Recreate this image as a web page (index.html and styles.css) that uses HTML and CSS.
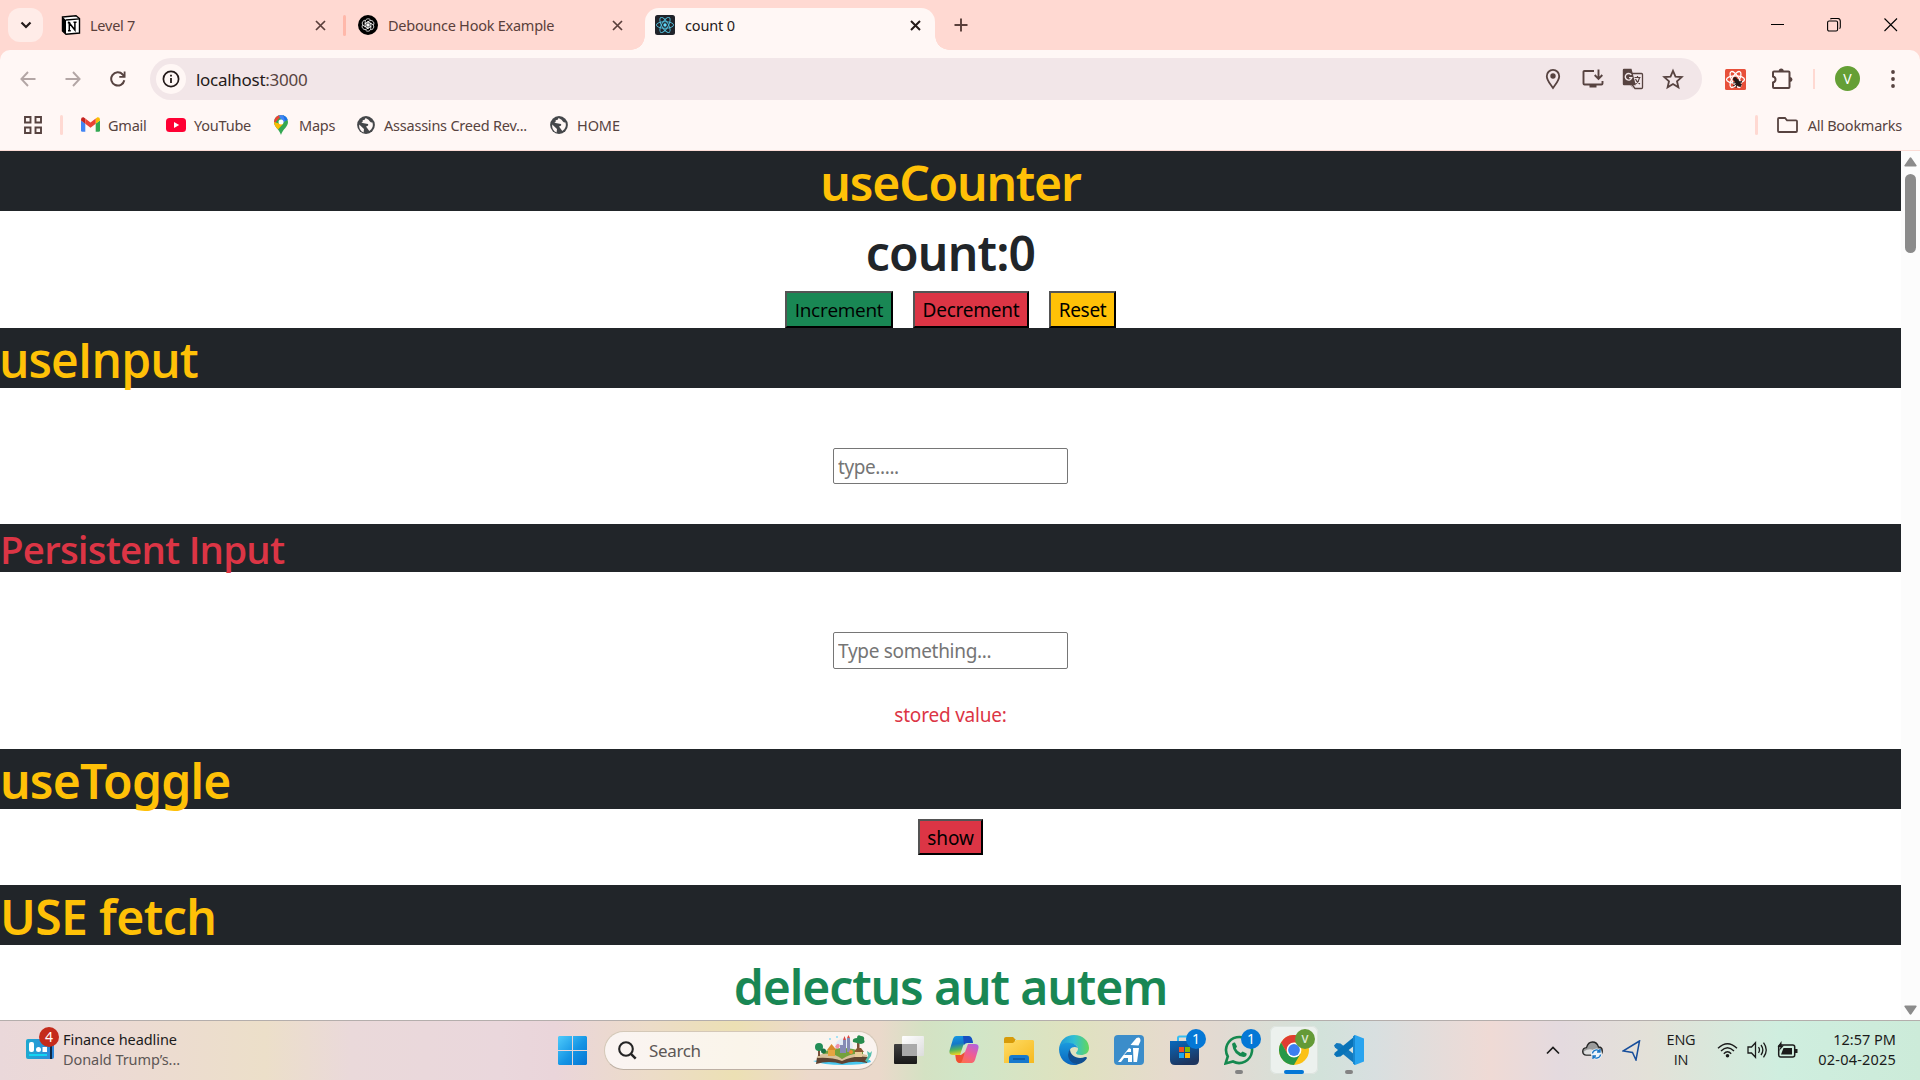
FILE: index.html
```
<!DOCTYPE html>
<html lang="en">
<head>
<meta charset="utf-8">
<title>count 0</title>
<link rel="stylesheet" href="styles.css">
</head>
<body>
<div class="screen">
  <header class="tabstrip">
    <div class="tab-search"><svg width="12" height="8" viewBox="0 0 12 8"><path d="M1.5 1.5 6 6l4.500-4.500" fill="none" stroke="#241a19" stroke-width="2.200"/></svg></div>
    <div class="tab tab-first">
      <svg width="20" height="20" viewBox="0 0 20 20"><path d="M1.500 2 15 .8 18.500 3.500V18L5 19.200 1.500 16z" fill="#fff" stroke="#000" stroke-width="1.400"/><path d="M1.500 2 5 5v14L1.500 16z" fill="#000"/><path d="M5 5 18.500 3.800" stroke="#000" stroke-width="1.300"/><path d="M8.300 15.500V8l5.600 7V7.500M6.800 7.800h2.500M12.500 7.300h3M7 15.700h2.800" stroke="#000" stroke-width="1.500" fill="none"/></svg>
      <span class="tab-title">Level 7</span>
      <svg class="close" width="11" height="11" viewBox="0 0 11 11"><path d="m1 1 9 9m0-9-9 9" stroke="#5a3f3b" stroke-width="1.700"/></svg>
    </div>
    <i class="tab-sep"></i>
    <div class="tab tab-second">
      <svg width="20" height="20" viewBox="0 0 20 20"><circle cx="10" cy="10" r="10" fill="#000"/><g fill="none" stroke="#fff" stroke-width=".8"><path id="petal" d="M7.200 12.200V6.800c0-3.500 4.600-4 5.500-1.300M8.600 10.800l4.200-2.400"/><use href="#petal" transform="rotate(60 10 10)"/><use href="#petal" transform="rotate(120 10 10)"/><use href="#petal" transform="rotate(180 10 10)"/><use href="#petal" transform="rotate(240 10 10)"/><use href="#petal" transform="rotate(300 10 10)"/></g></svg>
      <span class="tab-title">Debounce Hook Example</span>
      <svg class="close" width="11" height="11" viewBox="0 0 11 11"><path d="m1 1 9 9m0-9-9 9" stroke="#5a3f3b" stroke-width="1.700"/></svg>
    </div>
    <div class="tab tab-active">
      <svg width="20" height="20" viewBox="0 0 20 20"><rect width="20" height="20" rx="2.500" fill="#20232a"/><g fill="none" stroke="#53c1de" stroke-width=".9"><ellipse cx="10" cy="10" rx="8.600" ry="3.300"/><ellipse cx="10" cy="10" rx="8.600" ry="3.300" transform="rotate(60 10 10)"/><ellipse cx="10" cy="10" rx="8.600" ry="3.300" transform="rotate(120 10 10)"/></g><circle cx="10" cy="10" r="1.700" fill="#61dafb"/></svg>
      <span class="tab-title">count 0</span>
      <svg class="close" width="11" height="11" viewBox="0 0 11 11"><path d="m1 1 9 9m0-9-9 9" stroke="#241a19" stroke-width="2"/></svg>
    </div>
    <svg class="new-tab" width="14" height="14" viewBox="0 0 14 14"><path d="M7 .5v13M.5 7h13" stroke="#5a3f3b" stroke-width="1.900"/></svg>
    <div class="window-controls">
      <svg width="14" height="14" viewBox="0 0 14 14"><path d="M1 6.500h13" stroke="#000"/></svg>
      <svg width="14" height="14" viewBox="0 0 14 14"><rect x=".6" y="3" width="10" height="10" rx="1.500" fill="none" stroke="#000" stroke-width="1.100"/><path d="M3.300 1.200Q4 .5 5 .5h5.500q2.800 0 2.800 2.800V9q0 1-.8 1.600" fill="none" stroke="#000" stroke-width="1.100"/></svg>
      <svg width="14" height="14" viewBox="0 0 14 14"><path d="m.5.5 12.500 12.500m0-12.500L.5 13" stroke="#000" stroke-width="1.100"/></svg>
    </div>
  </header>

  <div class="chrome-body">
    <div class="toolbar">
      <svg class="back" width="16" height="16" viewBox="0 0 16 16"><path d="M8 1 1.400 8 8 15M1.500 8H15.500" fill="none" stroke="#b3a6a5" stroke-width="1.900"/></svg>
      <svg class="forward" width="16" height="16" viewBox="0 0 16 16"><path d="M8 1 14.600 8 8 15M14.500 8H.5" fill="none" stroke="#b3a6a5" stroke-width="1.900"/></svg>
      <svg class="reload" width="16" height="16" viewBox="0 0 16 16"><path d="M14.300 9.200A6.600 6.600 0 1 1 12.700 3.500L14.500 5.500" fill="none" stroke="#574340" stroke-width="2"/><path d="M15.500.5v6.300H9.300V5h4.400V.5z" fill="#574340"/></svg>
      <div class="omnibox">
        <span class="site-info"><svg width="18" height="18" viewBox="0 0 18 18"><circle cx="9" cy="9" r="7.600" fill="none" stroke="#241a19" stroke-width="1.700"/><path d="M9 8v5M9 4.800v1.800" stroke="#241a19" stroke-width="1.800"/></svg></span>
        <span class="url">localhost<span class="port">:3000</span></span>
        <div class="omni-icons">
          <svg width="22" height="22" viewBox="0 0 22 22"><path d="M11 1.900a6.200 6.200 0 0 0-6.200 6.300C4.800 12.400 8 15.500 11 20c3-4.500 6.200-7.600 6.200-11.800A6.200 6.200 0 0 0 11 1.900z" fill="none" stroke="#574340" stroke-width="1.800"/><circle cx="11" cy="8" r="2.700" fill="#574340"/></svg>
          <svg width="22" height="22" viewBox="0 0 22 22"><path d="M12 3H2.500q-1 0-1 1v11.500q0 1 1 1h17q1 0 1-1V13" fill="none" stroke="#574340" stroke-width="1.900"/><path d="M7.500 17h7v2.500h-7z" fill="#574340"/><path d="M16.500 1.500v9M12.700 7l3.800 3.800L20.300 7" fill="none" stroke="#574340" stroke-width="1.900"/></svg>
          <svg width="22" height="22" viewBox="0 0 22 22"><path d="M10 5.500h9.500q1 0 1 1v13q0 1-1 1H13l-3-4" fill="none" stroke="#574340" stroke-width="1.300"/><path d="M2 .8h7.500l4.300 16.500H9l2.500 4-3-4H2q-1.200 0-1.200-1.200V2Q.8.800 2 .8z" fill="#574340"/><path d="M9.300 6.900A3.300 3.300 0 1 0 9.800 9.600H7" fill="none" stroke="#f2e7e8" stroke-width="1.400"/><path d="M12.500 9.500h6M15.500 8v1.500m2 .3c-.5 3-2 4.700-4 6.200m0-5c.8 2.300 2.500 4 4.500 5" fill="none" stroke="#574340" stroke-width="1.200"/></svg>
          <svg width="22" height="22" viewBox="0 0 22 22"><path d="m11 2.800 2.500 5.800 6.200.5-4.700 4.100 1.400 6.100L11 16l-5.400 3.300L7 13.200 2.300 9.100l6.200-.5z" fill="none" stroke="#574340" stroke-width="1.800"/></svg>
        </div>
      </div>
      <svg class="ext" width="21" height="21" viewBox="0 0 21 21"><rect width="21" height="21" rx="1.500" fill="#e8503a"/><g fill="none" stroke="#fff" stroke-width="1.300"><ellipse cx="10.500" cy="10.500" rx="9" ry="3.600"/><ellipse cx="10.500" cy="10.500" rx="9" ry="3.600" transform="rotate(60 10.500 10.500)"/><ellipse cx="10.500" cy="10.500" rx="9" ry="3.600" transform="rotate(120 10.500 10.500)"/></g><ellipse cx="12.700" cy="13.500" rx="2.300" ry="4.500" transform="rotate(-35 12.700 13.500)" fill="#241a19"/><circle cx="10" cy="10" r="2" fill="#241a19"/><path d="m8 14 9-1m-6 6 2-9m-5 7 9-5m-2 6 1.500-3" stroke="#241a19" stroke-width="1"/></svg>
      <svg class="puzzle" width="22" height="22" viewBox="0 0 22 22"><path d="M3 3.500h14.500q1 0 1 1v14.500q0 1-1 1H3q-1 0-1-1v-4.500q2.500-.6 2.500-3t-2.500-3V4.500q0-1 1-1z" fill="none" stroke="#574340" stroke-width="2"/><path d="M7.700 3a2.500 2.500 0 0 1 5 0zM19 9a2.500 2.500 0 0 1 0 5z" fill="#574340"/></svg>
      <i class="tool-sep"></i>
      <span class="avatar">V</span>
      <svg class="kebab" width="4" height="18" viewBox="0 0 4 18"><circle cx="2" cy="2" r="1.900" fill="#574340"/><circle cx="2" cy="9" r="1.900" fill="#574340"/><circle cx="2" cy="16" r="1.900" fill="#574340"/></svg>
    </div>

    <nav class="bookmarks">
      <svg class="apps" width="18" height="18" viewBox="0 0 18 18"><path d="M1 1h5.500v5.500H1zM11.500 1H17v5.500h-5.500zM1 11.500h5.500V17H1zM11.500 11.500H17V17h-5.500z" fill="none" stroke="#574340" stroke-width="1.900"/></svg>
      <i class="bm-sep"></i>
      <span class="bm gmail"><svg width="19" height="15" viewBox="0 0 19 15"><path d="M0 3.500v10q0 1.300 1.300 1.300h3V6.500z" fill="#4285f4"/><path d="M19 3.500v10q0 1.300-1.300 1.300h-3V6.500z" fill="#34a853"/><path d="M0 2.500Q.2 0 2.500.3l1.800 1.200v5.300L0 3.600z" fill="#c5221f"/><path d="M19 2.500Q18.800 0 16.500.3l-1.800 1.200v5.300L19 3.600z" fill="#fbbc04"/><path d="M4.300 1.500 9.500 5.400l5.200-3.900v5.300l-5.200 3.900-5.200-3.900z" fill="#ea4335"/></svg>Gmail</span>
      <span class="bm youtube"><svg width="20" height="14" viewBox="0 0 20 14"><rect width="20" height="14" rx="3.500" fill="#f03"/><path d="M8 4v6l5.200-3z" fill="#fff"/></svg>YouTube</span>
      <span class="bm maps"><svg width="14" height="20" viewBox="0 0 14 20"><clipPath id="pin"><path d="M7 0a7 7 0 0 0-7 7c0 5 5.300 7 7 13 1.700-6 7-8 7-13a7 7 0 0 0-7-7z"/></clipPath><g clip-path="url(#pin)"><path d="M0 0h14v20H0z" fill="#34a853"/><path d="M0 0h8L0 9z" fill="#ea4335"/><path d="M4.500 0H14v3.500L9 8z" fill="#4285f4"/><path d="M9 0h5v5l-3 1z" fill="#1a73e8"/><path d="m0 7 5 1.500 4 .5-5.500 6L0 12z" fill="#fbbc04"/></g><circle cx="7" cy="7" r="2.500" fill="#fff"/></svg>Maps</span>
      <span class="bm globe creed"><svg width="18" height="18" viewBox="0 0 18 18"><circle cx="9" cy="9" r="8.900" fill="#45474a"/><path d="M2.200 8.500 7 13l-.4 3.400Q1.500 14.500 2.200 8.500zM8.600 2q-.4 2.200-2.900 2.200.5 2.200-1.400 2.600 4.400 1 6.700 1.200Q12 10 9 10.400l3.300 4.600q4.800-3 3.200-8.500-1.800.2-2.600-1-.6-2-4.300-3.500z" fill="#fff7f5"/></svg>Assassins Creed Rev...</span>
      <span class="bm globe home"><svg width="18" height="18" viewBox="0 0 18 18"><circle cx="9" cy="9" r="8.900" fill="#45474a"/><path d="M2.200 8.500 7 13l-.4 3.400Q1.500 14.500 2.200 8.500zM8.600 2q-.4 2.200-2.900 2.200.5 2.200-1.400 2.600 4.400 1 6.700 1.200Q12 10 9 10.400l3.300 4.600q4.800-3 3.200-8.500-1.800.2-2.600-1-.6-2-4.300-3.500z" fill="#fff7f5"/></svg>HOME</span>
      <div class="bm-all"><i class="bm-sep"></i><svg width="21" height="16" viewBox="0 0 21 16"><path d="M2 1h6l2 2.300h9q1 0 1 1V14q0 1-1 1H2q-1 0-1-1V2q0-1 1-1z" fill="none" stroke="#574340" stroke-width="1.800"/></svg><span>All Bookmarks</span></div>
    </nav>
  </div>

  <div class="viewport">
    <main class="page">
      <h1 class="bar t-counter">useCounter</h1>
      <h1 class="count">count:0</h1>
      <div class="buttons">
        <button class="btn success inc">Increment</button>
        <button class="btn danger dec">Decrement</button>
        <button class="btn warning reset">Reset</button>
      </div>
      <h1 class="bar t-input">useInput</h1>
      <div class="field"><input class="text-input" type="text" placeholder="type....."></div>
      <h2 class="bar bar-sub">Persistent Input</h2>
      <div class="field persistent"><input class="text-input wide-text" type="text" placeholder="Type something..."></div>
      <p class="stored">stored value:</p>
      <h1 class="bar t-toggle">useToggle</h1>
      <div class="toggle"><button class="btn danger show">show</button></div>
      <h1 class="bar t-fetch">USE fetch</h1>
      <h1 class="fetched">delectus aut autem</h1>
    </main>
    <aside class="scrollbar">
      <svg width="13" height="10" viewBox="0 0 13 10"><path d="M5.500 1q1-1.500 2 0l5 7.200q.6 1.300-.8 1.300H1.300Q-.1 9.500.5 8.200z" fill="#8b8b8b"/></svg>
      <i class="thumb"></i>
      <svg class="down" width="13" height="10" viewBox="0 0 13 10"><path d="M5.500 9q1 1.500 2 0l5-7.200Q13.100.5 11.700.5H1.300Q-.1.500.5 1.800z" fill="#8b8b8b"/></svg>
    </aside>
  </div>

  <footer class="taskbar">
    <div class="widget">
      <span class="widget-icon"><svg width="28" height="20" viewBox="0 0 28 20"><defs><linearGradient id="wg"><stop stop-color="#20a9d0"/><stop offset="1" stop-color="#2f86dc"/></linearGradient></defs><rect width="28" height="20" rx="2" fill="url(#wg)"/><path d="M24 6h2v14h-2z" fill="#0d2947"/><rect x="3" y="3" width="5" height="10" rx="2" fill="#fff"/><circle cx="12.500" cy="10.500" r="2.500" fill="#fff"/><path d="M16.500 8h4.500v5h-4.500z" fill="#fff"/><path d="M3 15h18v2H3z" fill="#12d4f2"/></svg><b class="badge-red">4</b></span>
      <span class="widget-text"><span class="headline">Finance headline</span><span class="sub">Donald Trump’s...</span></span>
    </div>
    <div class="dock">
      <svg class="win" width="29" height="29" viewBox="0 0 29 29"><defs><linearGradient id="w" x2="1" y2="1"><stop stop-color="#4fcbfb"/><stop offset=".55" stop-color="#1494e4"/><stop offset="1" stop-color="#0674d3"/></linearGradient></defs><path d="M1 0h13v14H0V1zM15 0h13l1 1v13H15zM0 15h14v14H1l-1-1zM15 15h14v13l-1 1H15z" fill="url(#w)"/></svg>
      <div class="search">
        <svg width="19" height="19" viewBox="0 0 19 19"><circle cx="8" cy="8" r="6.800" fill="none" stroke="#242424" stroke-width="2.100"/><path d="m12.700 12.700 5 5" stroke="#242424" stroke-width="2.500"/></svg>
        <span class="search-label">Search</span>
        <svg class="storybook" width="60" height="30" viewBox="0 0 60 30">
          <path d="M0 26q10-2 30-1 20-1 27 0l1 2q-8 3-28 3T0 26z" fill="#48c6ee"/>
          <circle cx="31" cy="12" r="9" fill="#e3ecf6"/>
          <path d="M10 17q20-8 40 0v7H9z" fill="#73a13c"/>
          <path d="M4 22q13-5 25 2 13-7 26-2l-1 6q-13-3-25 1-13-4-26 0z" fill="#5e4332"/>
          <path d="M5 20q14-4 24 4 12-8 25-4v2q-13-2-25 4Q18 22 4 23z" fill="#d8c19b"/>
          <path d="M30 5h3v13h-3zM34 3h3v14h-3zM27 10h3v8h-3z" fill="#858bb5"/>
          <path d="m30 5 1.500-4L33 5zM34 3l1.500-3L37 3z" fill="#d94845"/>
          <path d="M44 6h2.500v13H44z" fill="#795137"/><path d="M40 7q-1-4 4-4 0-4 4-2 4 0 3 4 2 3-3 4z" fill="#278c4e"/>
          <path d="M15 15h7v6h-7z" fill="#e6a541"/><path d="m14 15 4.500-6 5 6z" fill="#d98a2b"/>
          <path d="M42 16h7v6h-7z" fill="#e7cc9a"/><path d="m41 17 3-4h4l3 4z" fill="#885634"/>
          <path d="M5 15h2v6H5z" fill="#76513a"/><circle cx="6" cy="12" r="4" fill="#238d57"/><circle cx="10.500" cy="16" r="2.500" fill="#1c7245"/>
          <path d="M22 12q3-6 5-1l-2 3z" fill="#f28da3"/><path d="m52 26 3-5-1-5 3 2 2-2-1 5-4 6z" fill="#54bfae"/>
          <circle cx="38" cy="17" r="2" fill="#ef8a30"/><circle cx="17" cy="4" r="1" fill="#8bdcf5"/><circle cx="24" cy="2" r="1" fill="#8bdcf5"/>
        </svg>
      </div>
      <svg class="taskview" width="30" height="28" viewBox="0 0 30 28"><defs><linearGradient id="tv" x2="0" y2="1"><stop stop-color="#404040"/><stop offset="1" stop-color="#191919"/></linearGradient><linearGradient id="tw" x2="1" y2="1"><stop stop-color="#fff"/><stop offset="1" stop-color="#dcdcdc"/></linearGradient></defs><rect y="8" width="23" height="20" rx="1" fill="url(#tv)"/><rect x="8" width="22" height="20" rx="1" fill="url(#tw)"/><path d="M8 8h15v12H8z" fill="#a9a9a9"/></svg>
      <div class="app"><svg width="30" height="28" viewBox="0 0 30 28"><defs><linearGradient id="ca" x2=".2" y2="1"><stop stop-color="#169de5"/><stop offset=".45" stop-color="#1478c9"/><stop offset=".75" stop-color="#53b45b"/><stop offset="1" stop-color="#ead324"/></linearGradient><linearGradient id="cb" x1="1" x2=".3" y2="1"><stop stop-color="#a863e9"/><stop offset=".5" stop-color="#ed5d98"/><stop offset="1" stop-color="#ff704b"/></linearGradient></defs><path d="M7 0h12q3 0 4 3l1 4h-6q-3 0-4 3l-3 9H4q-5 0-3-6L4 3q1-3 3-3z" fill="url(#ca)"/><path d="M23 27H11q-3 0-4-3l-1-5h6q3 0 4-3l3-8h7q5 0 3 6l-3 10q-1 3-3 3z" fill="url(#cb)"/><path d="M14 0h5q3 0 4 3l1 4h-6q-2 0-3 2z" fill="#174fc1"/><path d="M7 19h5l4-3-3 9q-1 2-2 2-3 0-4-4z" fill="#ee5031"/></svg></div>
      <div class="app"><svg width="30" height="28" viewBox="0 0 30 28"><defs><linearGradient id="fo" x2="1" y2="1"><stop stop-color="#ffdc65"/><stop offset="1" stop-color="#f6b91e"/></linearGradient></defs><path d="M0 3q0-2 2-2h7l3 3h-1v6H0z" fill="#d79b09"/><path d="M0 7h9l3-3h17l1 1v22H0z" fill="url(#fo)"/><path d="M5 27v-5q0-3 3-3h14q3 0 3 3v5z" fill="#1679cd"/><path d="M9 23h12" stroke="#0b4a8e" stroke-width="1.200"/></svg></div>
      <div class="app"><svg width="30" height="30" viewBox="0 0 30 30"><defs><linearGradient id="ea" x2="1"><stop stop-color="#2096d8"/><stop offset=".5" stop-color="#30bfd4"/><stop offset="1" stop-color="#63d75a"/></linearGradient><linearGradient id="eb" x2="0" y2="1"><stop stop-color="#1a9ade"/><stop offset="1" stop-color="#0b65bd"/></linearGradient></defs><path d="M0 14C1 5 7 0 15 0c9 0 15 6 15 13 0 5-4 7-8 7-3 0-5-1-5-2s2-2 2-4c0-3-3-5-6-5C7 8 1 11 0 14z" fill="url(#ea)"/><path d="M0 14c1-5 6-7 11-6 4 0 7 3 8 5-5-3-10 1-9 7 1 6 5 9 10 9-2 1-4 1-5 1C6 30 0 23 0 14z" fill="url(#eb)"/><path d="M11 14c-5 8 1 16 9 15 4-1 7-4 8-6 0-1-1-1-2-1-7 3-15-1-15-8z" fill="#104f91"/></svg></div>
      <div class="app"><svg width="30" height="30" viewBox="0 0 30 30"><rect width="30" height="30" rx="4" fill="#3b8dca"/><path d="M4 27 15 13l2 1v3h-4l-3 3h8v7h-4v-4h-4l-3 4zM16.500 10l6-7q4-2 4 3l-2 4.500zM19 13h6l-2 14h-3.500z" fill="#fff"/></svg></div>
      <div class="app"><svg width="29" height="30" viewBox="0 0 29 30"><defs><linearGradient id="st" x2=".4" y2="1"><stop stop-color="#0869bd"/><stop offset="1" stop-color="#1d355f"/></linearGradient></defs><path d="M8 6V3q0-1.500 1.500-1.500H20" fill="none" stroke="#36bdf2" stroke-width="2"/><path d="M0 6h29v19q0 5-5 5H5q-5 0-5-5z" fill="url(#st)"/><path d="M9 12h5v5H9z" fill="#f25022"/><path d="M15 12h5v5h-5z" fill="#7fba00"/><path d="M9 18h5v5H9z" fill="#19a6ee"/><path d="M15 18h5v5h-5z" fill="#ffb900"/></svg><b class="badge">1</b></div>
      <div class="app"><svg width="30" height="30" viewBox="0 0 30 30"><path d="M1.600 28.400 3.800 21.500A13 13 0 1 1 9 26.500z" fill="none" stroke="#15894f" stroke-width="2.600"/><path d="M8 9q1-2 3-1.500l2 4-1.200 2q2 3.500 5 4.500l1.800-1.600 4 2Q23 21.500 19.500 22 9.500 20.500 8 9z" fill="#15894f"/></svg><b class="badge">1</b><i class="dot"></i></div>
      <div class="app current"><svg width="30" height="30" viewBox="0 0 30 30"><circle cx="15" cy="15" r="15" fill="#fbc116"/><path d="M2 7.500A15 15 0 0 1 28 7.500H15L8.500 18.800z" fill="#e03c31"/><path d="M2 7.500A15 15 0 0 0 14.900 30L21.500 18.700 15 15 8.500 18.700z" fill="#279847"/><circle cx="15" cy="15" r="7.400" fill="#fff"/><circle cx="15" cy="15" r="5.900" fill="#3c7ff0"/></svg><b class="badge profile">V</b><i class="dot active"></i></div>
      <div class="app"><svg width="30" height="30" viewBox="0 0 30 30"><path d="M0 10.500 2.500 8l4 .5L21 20v9L1 12.500z" fill="#1279bd"/><path d="M0 19.500 2.500 22l4-.5L21 10V1L1 17.500z" fill="#0873b8"/><path d="m21 0 9 3.500v23L21 30l-2-1.500V1.500z" fill="#29a4ef"/><path d="M19 1.500 21 0v30l-2-1.500z" fill="#1788d0"/></svg><i class="dot"></i></div>
    </div>
    <div class="tray">
      <svg class="chev" width="14" height="9" viewBox="0 0 14 9"><path d="m1 7.500 6-6 6 6" fill="none" stroke="#1b1b1b" stroke-width="1.700"/></svg>
      <svg class="cloud" width="21" height="19" viewBox="0 0 21 19"><path d="M4.500 14Q.7 14 .7 10.500T4.500 6.700Q6 1 10.500 1t6 5q3.800 0 3.800 4t-3.800 4z" fill="#9b9b9b" stroke="#252525" stroke-width="1.300"/><path d="M2 10.500q5-4 10-1l1 4H4.500Q2 13.500 2 10.500z" fill="#dedede"/><circle cx="14.500" cy="13" r="5.500" fill="#eef5fa"/><path d="M10.500 12.500a4 4 0 0 1 7.300-1.800M18.500 13.500a4 4 0 0 1-7.300 1.800M18 8v3h-3M11 18v-3h3" fill="none" stroke="#1674c4" stroke-width="1.300"/></svg>
      <svg class="loc" width="19" height="21" viewBox="0 0 19 21"><path d="M17.500 1 1 11l9.500 1.500L14 20z" fill="none" stroke="#174e9b" stroke-width="1.500"/></svg>
      <div class="lang"><span>ENG</span><span>IN</span></div>
      <svg class="wifi" width="21" height="16" viewBox="0 0 21 16"><circle cx="10.500" cy="13.800" r="1.800" fill="#1b1b1b"/><path d="M1 6.200q9.500-9 19 0M4 9q6.500-6.500 13 0M6.800 11.700q3.700-3.700 7.400 0" fill="none" stroke="#1b1b1b" stroke-width="1.400"/></svg>
      <svg class="vol" width="21" height="18" viewBox="0 0 21 18"><path d="M1 6h3.500l4-4.300v14.600l-4-4.300H1zM11.500 6.200q2 2.800 0 5.600M14 4q3.700 5 0 10M16.500 1.700q5.500 7.300 0 14.600" fill="none" stroke="#1b1b1b" stroke-width="1.300"/></svg>
      <svg class="bat" width="21" height="17" viewBox="0 0 21 17"><rect x="1.700" y="4" width="16" height="12" rx="2" fill="none" stroke="#1b1b1b" stroke-width="1.500"/><path d="M4 13.500 6.500 7H15v6.500zM18 8h2.500v4H18z" fill="#1b1b1b"/><path d="M4.500 0 .5 6h3L2 10l5-5.500H4.500z" fill="#1b1b1b"/></svg>
      <div class="clock"><span class="time">12:57 PM</span><span class="date">02-04-2025</span></div>
    </div>
  </footer>
</div>
</body>
</html>
```
FILE: styles.css
```
* { box-sizing: border-box; }
html, body { margin: 0; }
body { font-family: "Noto Sans", "Open Sans", sans-serif; overflow: hidden; }
svg { display: block; flex: none; }
i, b { font-style: normal; }
.screen { width: 1920px; height: 1080px; display: flex; flex-direction: column; background: linear-gradient(#ffd9d2 0 100px, #fff 100px); overflow: hidden; }

/* tab strip */
.tabstrip { height: 50px; display: flex; align-items: center; background: #ffd9d2; padding: 0 22px 0 8px; }
.tab-search { width: 35px; height: 34px; border-radius: 12px; background: #ffece8; display: flex; align-items: center; justify-content: center; }
.tab { display: flex; align-items: center; color: #5a3f3b; font-size: 14.5px; letter-spacing: -.24px; }
.tab-title { margin-left: 10px; line-height: 20px; flex: 1; white-space: nowrap; }
.tab-first { margin-left: 18px; width: 265px; }
.tab-first .tab-title { margin-left: 9px; }
.tab-sep { width: 3px; height: 21px; border-radius: 2px; background: #ffb8aa; margin-left: 17px; }
.tab-second { margin-left: 12px; width: 265px; }
.tab-active { position: relative; align-self: flex-end; height: 42px; width: 290px; margin-left: 22px; padding: 0 14px 8px 10px; border-radius: 14px 14px 0 0; background: #fff7f5; color: #241a19; letter-spacing: -.14px; }
.tab-active::before, .tab-active::after { content: ""; position: absolute; bottom: 0; width: 14px; height: 14px; }
.tab-active::before { left: -14px; background: radial-gradient(circle at 0 0, transparent 13.5px, #fff7f5 14px); }
.tab-active::after { right: -14px; background: radial-gradient(circle at 100% 0, transparent 13.5px, #fff7f5 14px); }
.new-tab { margin-left: 19px; }
.window-controls { margin-left: auto; display: flex; gap: 43px; }

/* toolbar */
.chrome-body { height: 101px; background: #fff7f5; border-bottom: 1px solid #fbdcd6; border-radius: 10px 10px 0 0; }
.toolbar { height: 50px; padding: 8px 0 0 20px; display: flex; align-items: center; }
.back, .forward, .reload { margin-top: -1px; }
.forward, .reload { margin-left: 29px; }
.omnibox { margin-left: 24px; width: 1552px; height: 42px; border-radius: 21px; background: #f2e6e8; display: flex; align-items: center; padding: 0 18px 0 6px; }
.site-info { width: 30px; height: 30px; border-radius: 50%; background: #fff7f5; display: flex; align-items: center; justify-content: center; }
.url { margin-left: 10px; font-size: 17px; letter-spacing: -.28px; color: #241a19; }
.port { color: #574340; }
.omni-icons { margin-left: auto; display: flex; gap: 18px; }
.ext { margin-left: 23px; }
.puzzle { margin-left: 25px; }
.tool-sep { width: 2px; height: 20px; background: #ffd9d2; margin-left: 20px; }
.avatar { width: 25px; height: 25px; border-radius: 50%; background: #659f35; color: #fff; font-size: 14px; line-height: 25px; text-align: center; margin: -1px 0 0 20px; }
.kebab { margin: -1px 0 0 31px; }

/* bookmarks */
.bookmarks { height: 50px; display: flex; align-items: center; padding: 0 0 1px 24px; font-size: 14.5px; line-height: 20px; color: #574340; }
.bm-sep { width: 3px; height: 20px; border-radius: 2px; background: #ffd9d2; margin-left: 18px; }
.bm { display: flex; align-items: center; letter-spacing: -.22px; white-space: nowrap; }
.gmail { width: 85px; margin-left: 18px; gap: 8px; }
.youtube { width: 108px; gap: 8px; }
.maps { width: 83px; gap: 11px; }
.globe { gap: 9px; }
.creed { width: 193px; }
.home { letter-spacing: -.1px; }
.bm-all { margin: 0 18px 0 auto; display: flex; align-items: center; letter-spacing: -.25px; }
.bm-all svg { margin: 0 10px 0 19px; }

/* page viewport */
.viewport { height: 869px; display: flex; background: #fff; overflow: hidden; }
.page { width: 1901px; color: #212529; text-align: center; }
h1, h2, p { margin: 0; }
.bar { background: #212529; height: 60px; padding-top: 2px; font-size: 48px; line-height: 60px; font-weight: 600; color: #ffc107; text-align: left; }
.t-counter { text-align: center; letter-spacing: -1.2px; }
.t-input { font-family: "Open Sans", "Noto Sans", sans-serif; letter-spacing: -.9px; text-indent: -1px; }
.t-toggle { letter-spacing: -.8px; }
.t-fetch { letter-spacing: -.6px; }
.bar-sub { height: 48px; padding-top: 1px; font-family: "Open Sans", "Noto Sans", sans-serif; font-size: 38.4px; line-height: 48px; color: #dc3545; letter-spacing: -.78px; }
.count, .fetched { height: 60px; margin: 10px 0; padding-top: 2px; font-size: 48px; line-height: 60px; font-weight: 600; }
.count { letter-spacing: -.8px; }
.fetched { color: #198754; letter-spacing: -1.1px; }
.buttons { height: 37px; display: flex; justify-content: center; gap: 20px; }
.btn { height: 37px; padding: 0; border: 2px outset #000; border-radius: 0; font-family: inherit; font-size: 19px; line-height: 30px; color: #000; }
.success { background: #198754; }
.danger { background: #dc3545; }
.warning { background: #ffc107; }
.inc { width: 108px; font-family: "Open Sans", "Noto Sans", sans-serif; letter-spacing: -.3px; }
.dec { width: 116px; letter-spacing: -.22px; }
.reset { width: 67px; letter-spacing: -.3px; }
.show { width: 65px; height: 36px; padding-top: 1px; letter-spacing: -.1px; }
.field { height: 136px; padding-top: 60px; display: flex; justify-content: center; align-items: flex-start; }
.text-input { width: 235px; height: 36px; padding: 2px 4px 0; border: 1px solid #767676; border-radius: 2px; background: #fff; font-family: inherit; font-size: 19px; letter-spacing: -.4px; }
.wide-text { height: 37px; padding-top: 1px; letter-spacing: -.3px; }
.text-input::placeholder { color: #757575; opacity: 1; }
.persistent { height: 128px; }
.stored { height: 49px; font-size: 19px; line-height: 30px; color: #dc3545; letter-spacing: -.2px; }
.toggle { height: 76px; padding-top: 10px; }
.scrollbar { width: 19px; background: #fcfcfc; display: flex; flex-direction: column; align-items: center; padding: 6px 0 5px; }
.thumb { width: 11px; height: 79px; border-radius: 6px; background: #8b8b8b; margin-top: 7px; }
.down { margin-top: auto; }

/* taskbar */
.taskbar { height: 60px; display: flex; align-items: center; border-top: 1px solid #b4aeac; background: linear-gradient(90deg, #ead8da 0, #ecdad4 110px, #ecdfc9 265px, #ead9da 350px, #ead7dc 500px, #ead5da 555px, #ecdcc8 650px, #ece0b4 735px, #ecd9cb 810px, #ead9cb 880px, #d4e2c3 925px, #d0e6c8 970px, #dfe2bf 1070px, #e6dace 1175px, #e2dad2 1220px, #d2e2da 1320px, #d8dfe0 1375px, #efdad5 1490px, #e4dadf 1560px, #e3e1d8 1650px, #cfeedf 1780px, #ccebd9 1920px); }
.widget { width: 532px; padding-left: 26px; display: flex; align-items: center; }
.widget-icon { position: relative; width: 28px; margin-top: -4px; }
.badge-red { position: absolute; left: 13px; top: -12px; width: 20px; height: 20px; border-radius: 50%; background: #c42b1c; color: #fff; font-size: 14px; line-height: 20px; font-weight: 400; text-align: center; }
.widget-text { display: flex; flex-direction: column; margin-left: 9px; font-size: 14.5px; line-height: 20px; letter-spacing: -.07px; color: #1b1b1b; white-space: nowrap; margin-top: -4px; }
.sub { color: #5d5755; }
.dock { display: flex; align-items: center; height: 60px; padding-bottom: 1px; }
.win { margin-left: 26px; }
.search { width: 274px; height: 39px; margin-left: 17px; border: 1px solid #d4c8b8; border-bottom-color: #bdb0a4; border-radius: 20px; background: linear-gradient(90deg, #faf4f2, #faf5ea 50%, #faf3f0); display: flex; align-items: center; padding: 0 4px 0 13px; }
.search-label { margin-left: 12px; font-size: 17px; letter-spacing: -.35px; color: #5d5755; }
.storybook { margin-left: auto; }
.taskview { margin: 0 12px 0 16px; }
.app { position: relative; width: 48px; height: 48px; margin-right: 7px; border-radius: 6px; display: flex; align-items: center; justify-content: center; }
.taskview + .app { margin-left: 4px; }
.current { background: #ecf1ee; box-shadow: inset 0 0 0 1px #dde4df; }
.badge { position: absolute; right: 2px; top: 3px; width: 20px; height: 20px; border-radius: 50%; background: #0477d6; color: #fff; font-weight: 400; font-size: 14px; line-height: 20px; text-align: center; }
.profile { background: #649a37; right: 3px; font-size: 11px; font-weight: 600; color: #dfe9d4; }
.dot { position: absolute; bottom: 0; left: 20px; width: 8px; height: 4px; border-radius: 2px; background: #838383; }
.dot.active { left: 14px; width: 20px; background: #0477d6; }
.tray { margin-left: auto; margin-right: 24px; display: flex; align-items: center; font-size: 14.5px; line-height: 20px; color: #1b1b1b; }
.chev, .cloud, .loc { margin-top: -1px; }
.cloud { margin-left: 22px; }
.loc { margin-left: 19px; }
.lang { width: 40px; margin: -2px 0 0 20px; display: flex; flex-direction: column; text-align: center; font-family: "Open Sans", "Noto Sans", sans-serif; letter-spacing: -.2px; }
.wifi { margin: -2px 0 0 16px; }
.vol { margin: -2px 0 0 9px; }
.bat { margin: -2px 0 0 9px; }
.clock { width: 98px; display: flex; flex-direction: column; text-align: right; margin-top: -4px; }
.date { letter-spacing: .2px; }
```
